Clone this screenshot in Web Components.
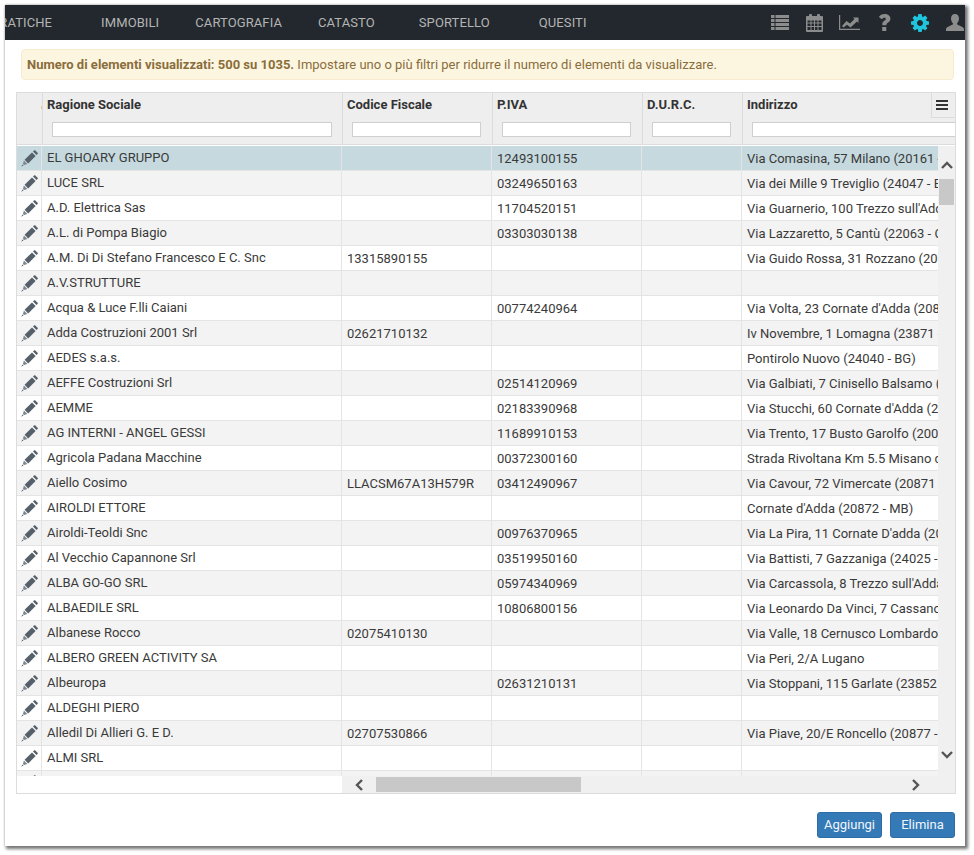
<!DOCTYPE html>
<html lang="it">
<head>
<meta charset="utf-8">
<title>Anagrafica</title>
<style>
html, body { margin: 0; padding: 0; background: #fff; height: 855px; overflow: hidden; }
body { font: 13px Roboto, "Liberation Sans", sans-serif; color: #333; padding: 5px 0 0 5px; box-sizing: border-box; }
</style>
</head>
<body>
<app-window>
  <app-navbar slot="nav"></app-navbar>
  <app-alert slot="alert"><b>Numero di elementi visualizzati: 500 su 1035.</b> Impostare uno o più filtri per ridurre il numero di elementi da visualizzare.</app-alert>
  <data-grid slot="grid"></data-grid>
  <app-button slot="actions">Aggiungi</app-button>
  <app-button slot="actions">Elimina</app-button>
</app-window>

<script>
const ICONS = {
  list: '<svg width="18" height="15" viewBox="0 0 18 15"><g fill="#8c8c8c"><path d="M0 0h3.500v3H0zM4.500 0H18v3H4.500zM0 4h3.500v3H0zM4.500 4H18v3H4.500zM0 8h3.500v3H0zM4.500 8H18v3H4.500zM0 12h3.500v3H0zM4.500 12H18v3H4.500z"/></g></svg>',
  calendar: '<svg width="17" height="18" viewBox="0 0 17 18"><path fill="#8c8c8c" fill-rule="evenodd" d="M1 2h2V1a1 1 0 0 1 1-1h1a1 1 0 0 1 1 1v1h5V1a1 1 0 0 1 1-1h1a1 1 0 0 1 1 1v1h2a1 1 0 0 1 1 1v14a1 1 0 0 1-1 1H1a1 1 0 0 1-1-1V3a1 1 0 0 1 1-1zM1.500 6.500v2h3v-2zm4 0v2h2.500v-2zm3.500 0v2h2.500v-2zm3.500 0v2h3v-2zM1.500 9.500v2.500h3V9.500zm4 0v2.500h2.500V9.500zm3.500 0v2.500h2.500V9.500zm3.500 0v2.500h3V9.500zM1.500 13v3h3v-3zm4 0v3h2.500v-3zm3.500 0v3h2.500v-3zm3.500 0v3h3v-3z"/></svg>',
  chart: '<svg width="21" height="15" viewBox="0 0 21 15"><path fill="#8c8c8c" d="M0 0h1.200v13.800H21V15H0z"/><path fill="#8c8c8c" d="M3 11l4.500-5 3.500 2.500L15.500 4l-1.500-1.500H19.500V8L18 6.500l-6.500 6-3.500-2.800L4.500 12.500z"/></svg>',
  gear: '<svg width="18" height="18" viewBox="128 128 1536 1536"><path fill="#20c4dc" d="M1152 896q0-106-75-181t-181-75-181 75-75 181 75 181 181 75 181-75 75-181zm512-109v222q0 12-8 23t-20 13l-185 28q-19 54-39 91 35 50 107 138 10 12 10 25t-9 23q-27 37-99 108t-94 71q-12 0-26-9l-138-108q-44 23-91 38-16 136-29 186-7 28-36 28h-222q-14 0-24.500-8.500t-11.500-21.500l-28-184q-49-16-90-37l-141 107q-10 9-25 9-14 0-25-11-126-114-165-168-7-10-7-23 0-12 8-23 15-21 51-66.500t54-70.500q-27-50-41-99l-183-27q-13-2-21-12.500t-8-23.500v-222q0-12 8-23t19-13l186-28q14-46 39-92-40-57-107-138-10-12-10-24 0-10 9-23 26-36 98.500-107.500t94.500-71.500q13 0 26 10l138 107q44-23 91-38 16-136 29-186 7-28 36-28h222q14 0 24.500 8.500t11.500 21.500l28 184q49 16 90 37l142-107q9-9 24-9 13 0 25 10 129 119 165 170 7 8 7 22 0 12-8 23-15 21-51 66.500t-54 70.500q26 50 41 98l183 28q13 2 21 12.500t8 23.500z"/></svg>',
  help: '<svg width="13" height="17" viewBox="0 0 13 17"><path fill="#8c8c8c" d="M4.300 11.300V10c0-1.500.6-2.300 2-3.200 1-.7 1.500-1.100 1.500-1.800 0-.8-.6-1.300-1.500-1.300-1 0-1.800.6-2.500 1.600L.9 3.100C2 1.100 3.900 0 6.500 0c3.400 0 5.900 1.800 5.900 4.700 0 2-1.100 3.100-2.600 4.100-1 .7-1.300 1.100-1.300 1.800v.7zM4.200 13h4.100v4H4.200z"/></svg>',
  user: '<svg width="18" height="17" viewBox="0 0 18 17"><path fill="#8c8c8c" d="M9 0c2.500 0 4 1.800 4 4.500 0 1.800-.7 3.600-1.800 4.700-.4.400-.4 1 .1 1.300l5 2.400c1 .5 1.700 1.200 1.700 2.300V17H0v-1.800c0-1.100.7-1.800 1.700-2.300l5-2.400c.5-.3.500-.9.100-1.300C5.700 8.100 5 6.300 5 4.500 5 1.800 6.500 0 9 0z"/></svg>',
  pencil: '<svg width="17" height="17" viewBox="0 0 17 17"><g fill="#55606a"><path d="M3.600 9.800L11 2.400l3.600 3.600-7.400 7.400z"/><path d="M12 1.500L13.300.2h.8l2.700 2.700v.8L15.500 5z"/></g><path fill="#7d8790" d="M2.900 10.600l3.500 3.500-3.300 1-1.200-1.200z"/><path fill="#5c6670" d="M1.500 14.500l1 1-2.300 1.300z"/></svg>',
  bars: '<svg width="12" height="10" viewBox="0 0 12 10"><path fill="#333" d="M0 0h12v2H0zM0 4h12v2H0zM0 8h12v2H0z"/></svg>',
  up: '<svg width="12" height="8" viewBox="0 0 12 8"><path fill="none" stroke="#555" stroke-width="2.400" d="M1 7l5-5 5 5"/></svg>',
  down: '<svg width="12" height="8" viewBox="0 0 12 8"><path fill="none" stroke="#555" stroke-width="2.400" d="M1 1l5 5 5-5"/></svg>',
  left: '<svg width="8" height="12" viewBox="0 0 8 12"><path fill="none" stroke="#555" stroke-width="2.400" d="M7 1L2 6l5 5"/></svg>',
  right: '<svg width="8" height="12" viewBox="0 0 8 12"><path fill="none" stroke="#555" stroke-width="2.400" d="M1 1l5 5-5 5"/></svg>'
};

const ROWS = [
  ['EL GHOARY GRUPPO', '', '12493100155', 'Via Comasina, 57 Milano (20161 - MI)'],
  ['LUCE SRL', '', '03249650163', 'Via dei Mille 9 Treviglio (24047 - BG)'],
  ['A.D. Elettrica Sas', '', '11704520151', "Via Guarnerio, 100 Trezzo sull'Adda (20056 - MI)"],
  ['A.L. di Pompa Biagio', '', '03303030138', 'Via Lazzaretto, 5 Cantù (22063 - CO)'],
  ['A.M. Di Di Stefano Francesco E C. Snc', '13315890155', '', 'Via Guido Rossa, 31 Rozzano (20089 - MI)'],
  ['A.V.STRUTTURE', '', '', ''],
  ['Acqua &amp; Luce F.lli Caiani', '', '00774240964', "Via Volta, 23 Cornate d'Adda (20872 - MB)"],
  ['Adda Costruzioni 2001 Srl', '02621710132', '', 'Iv Novembre, 1 Lomagna (23871 - LC)'],
  ['AEDES s.a.s.', '', '', 'Pontirolo Nuovo (24040 - BG)'],
  ['AEFFE Costruzioni Srl', '', '02514120969', 'Via Galbiati, 7 Cinisello Balsamo (20092 - MI)'],
  ['AEMME', '', '02183390968', "Via Stucchi, 60 Cornate d'Adda (20872 - MB)"],
  ['AG INTERNI - ANGEL GESSI', '', '11689910153', 'Via Trento, 17 Busto Garolfo (20020 - MI)'],
  ['Agricola Padana Macchine', '', '00372300160', 'Strada Rivoltana Km 5.5 Misano di Gera d\'Adda'],
  ['Aiello Cosimo', 'LLACSM67A13H579R', '03412490967', 'Via Cavour, 72 Vimercate (20871 - MB)'],
  ['AIROLDI ETTORE', '', '', "Cornate d'Adda (20872 - MB)"],
  ['Airoldi-Teoldi Snc', '', '00976370965', "Via La Pira, 11 Cornate D'adda (20872 - MB)"],
  ['Al Vecchio Capannone Srl', '', '03519950160', 'Via Battisti, 7 Gazzaniga (24025 - BG)'],
  ['ALBA GO-GO SRL', '', '05974340969', "Via Carcassola, 8 Trezzo sull'Adda (20056 - MI)"],
  ['ALBAEDILE SRL', '', '10806800156', "Via Leonardo Da Vinci, 7 Cassano d'Adda (20062)"],
  ['Albanese Rocco', '02075410130', '', 'Via Valle, 18 Cernusco Lombardone (23870 - LC)'],
  ['ALBERO GREEN ACTIVITY SA', '', '', 'Via Peri, 2/A Lugano'],
  ['Albeuropa', '', '02631210131', 'Via Stoppani, 115 Garlate (23852 - LC)'],
  ['ALDEGHI PIERO', '', '', ''],
  ['Alledil Di Allieri G. E D.', '02707530866', '', 'Via Piave, 20/E Roncello (20877 - MB)'],
  ['ALMI SRL', '', '', ''],
  ['&nbsp;', '', '', '']
];

class AppWindow extends HTMLElement {
  constructor() {
    super();
    this.attachShadow({mode: 'open'}).innerHTML = `
<style>
:host { display: flex; flex-direction: column; box-sizing: border-box; width: 960px; height: 841px; background: #fff; box-shadow: 2px 2px 3px 1px #777, 0 0 2px #bbb; }
.alert { padding: 9px 11px 0 16px; }
.grid { padding: 12px 9px 0 11px; }
.actions { display: flex; justify-content: flex-end; gap: 8px; padding: 18px 10px 0 0; }
</style>
<slot name="nav"></slot>
<div class="alert"><slot name="alert"></slot></div>
<div class="grid"><slot name="grid"></slot></div>
<div class="actions"><slot name="actions"></slot></div>`;
  }
}

class AppNavbar extends HTMLElement {
  constructor() {
    super();
    const items = [['PRATICHE', 0], ['IMMOBILI', 49], ['CARTOGRAFIA', 36], ['CATASTO', 36], ['SPORTELLO', 44], ['QUESITI', 49]];
    const icons = ['list', 'calendar', 'chart', 'help', 'gear', 'user'];
    this.attachShadow({mode: 'open'}).innerHTML = `
<style>
:host { display: flex; align-items: center; justify-content: space-between; height: 35px; background: #22282d; overflow: hidden; flex: none; }
nav { display: flex; margin-left: -14px; padding-bottom: 1px; }
span { color: #b4b4b4; font-size: 13px; letter-spacing: .1px; white-space: nowrap; }
.icons { display: flex; align-items: center; flex: none; margin-right: -7px; }
.icons div { display: flex; justify-content: center; align-items: center; width: 35px; height: 35px; flex: none; }
svg { display: block; }
</style>
<nav>${items.map(([t, m]) => `<span style="margin-left:${m}px">${t}</span>`).join('')}</nav>
<div class="icons">${icons.map(i => `<div>${ICONS[i]}</div>`).join('')}</div>`;
  }
}

class AppAlert extends HTMLElement {
  constructor() {
    super();
    this.attachShadow({mode: 'open'}).innerHTML = `
<style>
:host { display: block; box-sizing: border-box; height: 31px; padding: 0 5px; line-height: 29px; background: #fcf6e1; border: 1px solid #f7ebcf; border-radius: 4px; color: #8a6d3b; font-size: 13px; white-space: nowrap; overflow: hidden; }
</style>
<slot></slot>`;
  }
}

class AppButton extends HTMLElement {
  constructor() {
    super();
    this.attachShadow({mode: 'open'}).innerHTML = `
<style>
:host { display: block; box-sizing: border-box; width: 65px; height: 26px; line-height: 24px; text-align: center; background: #337ab7; border: 1px solid #2e6da4; border-radius: 3px; color: #f2f6fa; font-size: 13px; }
</style>
<slot></slot>`;
  }
}

class DataGrid extends HTMLElement {
  constructor() {
    super();
    const head = [['Ragione Sociale', 300], ['Codice Fiscale', 150], ['P.IVA', 150], ['D.U.R.C.', 100], ['Indirizzo', 214]];
    const rows = ROWS.map((r, i) => `
<div class="row ${i === 0 ? 'sel' : i % 2 ? 'alt' : ''}">
  <div class="c edit">${ICONS.pencil}</div>
  <div class="c name" style="width:300px">${r[0]}</div>
  <div class="c" style="width:150px">${r[1]}</div>
  <div class="c" style="width:150px">${r[2]}</div>
  <div class="c" style="width:100px"></div>
  <div class="c last" style="width:400px">${r[3]}</div>
</div>`).join('');
    this.attachShadow({mode: 'open'}).innerHTML = `
<style>
:host { display: flex; flex-direction: column; position: relative; box-sizing: border-box; width: 940px; height: 702px; border: 1px solid #dcdcdc; background: #fff; overflow: hidden; font-size: 13px; }
.head { display: flex; flex: none; box-sizing: border-box; height: 52px; background: #eee; border-bottom: 1px solid #dcdcdc; overflow: hidden; }
.hc { box-sizing: border-box; flex: none; padding: 4px 5px 0 4px; border-left: 1px solid #dcdcdc; font-weight: 700; color: #333; }
.hc:first-child { width: 25px; border-left: 0; position: relative; }
.hc:first-child::after { content: ""; position: absolute; right: 0; top: 13px; width: 1px; height: 3px; background: #f2c98c; }
.hc div { height: 16px; line-height: 16px; white-space: nowrap; }
.hc input { display: block; box-sizing: border-box; height: 15px; margin: 9px 0 0 5px; padding: 0; border: 1px solid #cfcfcf; background: #fff; border-radius: 0; outline: 0; }
.menu { position: absolute; top: 0; right: 0; display: flex; align-items: center; justify-content: center; box-sizing: border-box; width: 24px; height: 25px; padding-right: 4px; background: #eee; border-left: 1px solid #dcdcdc; border-bottom: 1px solid #dcdcdc; }
.mid { display: flex; flex: none; height: 630px; margin-top: 1px; }
.rows { flex: 1; min-width: 0; overflow: hidden; }
.row { display: flex; height: 25px; box-sizing: border-box; border-bottom: 1px solid #e4e4e4; color: #3a3a3a; white-space: nowrap; }
.row.alt { background: #f3f3f3; }
.row.sel { background: #c5d9de; }
.c { box-sizing: border-box; flex: none; height: 24px; padding: 5px 0 0 5px; line-height: 16px; border-right: 1px solid #e4e4e4; overflow: hidden; }
.c.name { padding-top: 4px; }
.c.last { border-right: 0; }
.c.edit { width: 25px; padding: 4px 0 0 4px; }
.c.edit svg { display: block; }
.vbar { display: flex; flex-direction: column; flex: none; width: 17px; background: #f0f0f0; }
.vbar .arrow { display: flex; justify-content: center; padding-top: 15px; height: 18px; }
.vbar .thumb { height: 26px; margin: 0 1px; background: #c8c8c8; }
.vbar .fill { flex: 1; }
.vbar .arrow.end { padding: 0; height: 42px; align-items: center; }
.hrow { display: flex; flex: none; height: 17px; }
.hblank { width: 325px; flex: none; background: #fff; }
.hbar { flex: 1; display: flex; align-items: center; background: #f0f0f0; }
.hbar .l { width: 34px; display: flex; justify-content: center; flex: none; }
.hbar .thumb { width: 205px; height: 15px; background: #c8c8c8; flex: none; }
.hbar .fill { flex: 1; }
.hbar .r { width: 78px; display: flex; justify-content: center; flex: none; }
svg { display: block; }
</style>
<div class="head">
  <div class="hc"></div>
  ${head.map(([t, w], i) => `<div class="hc" style="width:${w}px"><div>${t}</div><input style="width:${[280, 129, 129, 79, 220][i]}px"></div>`).join('')}
</div>
<div class="menu">${ICONS.bars}</div>
<div class="mid">
  <div class="rows">${rows}</div>
  <div class="vbar">
    <div class="arrow">${ICONS.up}</div>
    <div class="thumb"></div>
    <div class="fill"></div>
    <div class="arrow end">${ICONS.down}</div>
  </div>
</div>
<div class="hrow">
  <div class="hblank"></div>
  <div class="hbar">
    <div class="l">${ICONS.left}</div>
    <div class="thumb"></div>
    <div class="fill"></div>
    <div class="r">${ICONS.right}</div>
  </div>
</div>`;
  }
}

customElements.define('app-window', AppWindow);
customElements.define('app-navbar', AppNavbar);
customElements.define('app-alert', AppAlert);
customElements.define('app-button', AppButton);
customElements.define('data-grid', DataGrid);
</script>
</body>
</html>
